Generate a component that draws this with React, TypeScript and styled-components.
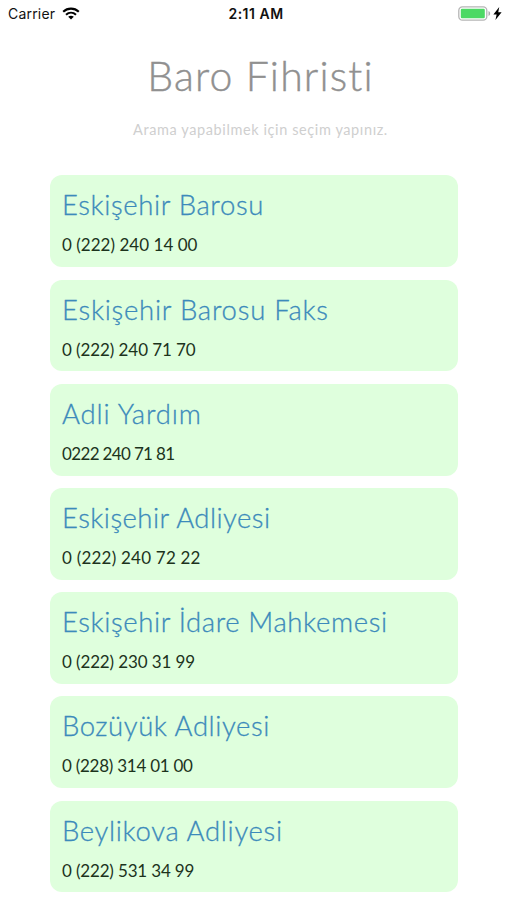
import React from "react";
import styled, { createGlobalStyle } from "styled-components";

const GlobalStyle = createGlobalStyle`
  * { box-sizing: border-box; }
  body {
    margin: 0;
    background: #fff;
    font-family: "Lato", sans-serif;
    font-variant-ligatures: none;
  }
`;

const Screen = styled.main`
  width: 507px;
  height: 900px;
  overflow: hidden;
  background: #fff;
`;

const StatusBar = styled.header`
  display: grid;
  grid-template-columns: 1fr auto 1fr;
  align-items: center;
  height: 27px;
  padding: 0 5px 0 8px;
  font-family: "Inter", sans-serif;
  font-size: 14px;
  color: #111;
`;

const Carrier = styled.div`
  display: flex;
  align-items: center;
  gap: 7px;
  letter-spacing: 0.2px;
`;

const Clock = styled.time`
  padding-left: 2px;
  font-weight: 600;
  letter-spacing: 0.5px;
`;

const Power = styled.div`
  display: flex;
  align-items: center;
  justify-content: flex-end;
  gap: 2px;
`;

const Heading = styled.section`
  display: flex;
  flex-direction: column;
  align-items: center;
  height: 148.4px;
`;

const Title = styled.h1`
  margin: 22px 0 0 14px;
  font-size: 41px;
  line-height: 54px;
  font-weight: 300;
  letter-spacing: 1.15px;
  color: #909090;
  -webkit-text-stroke: 0.4px #909090;
  white-space: nowrap;
`;

const Hint = styled.p`
  margin: 17px 0 0 14px;
  font-size: 14.5px;
  line-height: 20px;
  letter-spacing: 0.6px;
  color: #cfcfcf;
  white-space: nowrap;
`;

const List = styled.ul`
  display: grid;
  gap: 12.4px;
  margin: 0 49px 0 50px;
  padding: 0;
  list-style: none;
`;

const Card = styled.li`
  height: 91.8px;
  padding: 12px 12px 0;
  border-radius: 12px;
  background: #dfffdd;
`;

const Name = styled.h2<{ $spacing: number }>`
  margin: 0;
  font-size: 27.5px;
  line-height: 36px;
  font-weight: 300;
  letter-spacing: ${(p) => p.$spacing}px;
  color: #3c8abb;
  -webkit-text-stroke: 0.3px #3c8abb;
  white-space: nowrap;
`;

const Phone = styled.p<{ $spacing: number }>`
  margin: 10px 0 0;
  font-size: 17px;
  line-height: 24px;
  letter-spacing: ${(p) => p.$spacing}px;
  color: #1c331c;
  white-space: nowrap;
`;

const contacts = [
  { name: "Eskişehir Barosu", phone: "0 (222) 240 14 00", nameSpacing: 0.62, phoneSpacing: 0.03 },
  { name: "Eskişehir Barosu Faks", phone: "0 (222) 240 71 70", nameSpacing: 0.75, phoneSpacing: -0.08 },
  { name: "Adli Yardım", phone: "0222 240 71 81", nameSpacing: 0.83, phoneSpacing: -0.65 },
  { name: "Eskişehir Adliyesi", phone: "0 (222) 240 72 22", nameSpacing: 0.46, phoneSpacing: 0.22 },
  { name: "Eskişehir İdare Mahkemesi", phone: "0 (222) 230 31 99", nameSpacing: 0.62, phoneSpacing: -0.12 },
  { name: "Bozüyük Adliyesi", phone: "0 (228) 314 01 00", nameSpacing: 0.57, phoneSpacing: -0.25 },
  { name: "Beylikova Adliyesi", phone: "0 (222) 531 34 99", nameSpacing: 0.68, phoneSpacing: -0.16 },
];

const WifiIcon = () => (
  <svg width="18" height="13" viewBox="0 0 18 13" fill="none" stroke="#000" strokeWidth="2.1">
    <path d="M1.2 4.8C5.6.6 12.4.6 16.8 4.8" />
    <path d="M4 7.7c2.9-2.6 7.1-2.6 10 0" />
    <path d="M9 12.6 6.2 9.7c1.6-1.4 4-1.4 5.6 0z" fill="#000" stroke="none" />
  </svg>
);

const BatteryIcon = () => (
  <svg width="33" height="15" viewBox="0 0 33 15">
    <rect x=".8" y=".8" width="28" height="13.4" rx="3.6" fill="#fff" stroke="#b5b5b5" strokeWidth="1.3" />
    <rect x="2.8" y="2.8" width="24" height="9.4" rx="1.2" fill="#4cd964" />
    <path d="M30.5 5v5c2.2-.7 2.2-4.3 0-5z" fill="#aaa" />
  </svg>
);

const BoltIcon = () => (
  <svg width="9" height="13" viewBox="0 0 8 12">
    <path d="M5.6 0 .2 6.9h3L2.1 12l5.7-7.1H4.7z" fill="#000" />
  </svg>
);

export default function App() {
  return (
    <Screen>
      <GlobalStyle />
      <StatusBar>
        <Carrier>
          Carrier
          <WifiIcon />
        </Carrier>
        <Clock>2:11 AM</Clock>
        <Power>
          <BatteryIcon />
          <BoltIcon />
        </Power>
      </StatusBar>
      <Heading>
        <Title>Baro Fihristi</Title>
        <Hint>Arama yapabilmek için seçim yapınız.</Hint>
      </Heading>
      <List>
        {contacts.map((c) => (
          <Card key={c.name}>
            <Name $spacing={c.nameSpacing}>{c.name}</Name>
            <Phone $spacing={c.phoneSpacing}>{c.phone}</Phone>
          </Card>
        ))}
      </List>
    </Screen>
  );
}
